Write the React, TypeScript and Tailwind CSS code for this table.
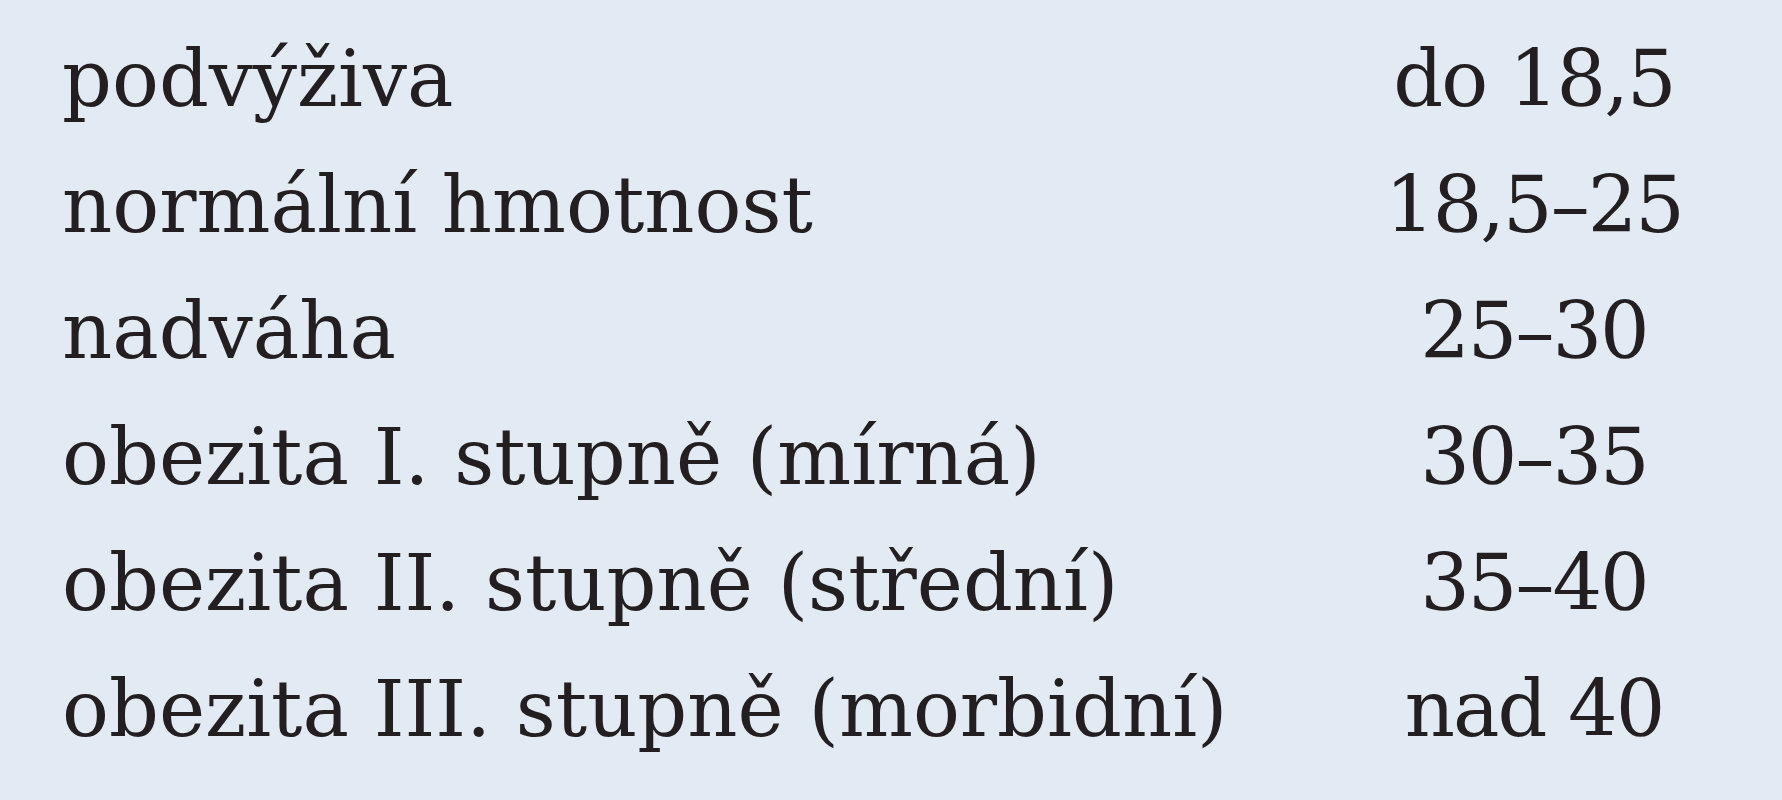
import React from "react";

const rows: [string, string][] = [
  ["podvýživa", "do 18,5"],
  ["normální hmotnost", "18,5–25"],
  ["nadváha", "25–30"],
  ["obezita I. stupně (mírná)", "30–35"],
  ["obezita II. stupně (střední)", "35–40"],
  ["obezita III. stupně (morbidní)", "nad 40"],
];

export default function App() {
  return (
    <div
      className="w-[1782px] h-[800px] bg-[#e2ebf3] text-[#231f20] pt-[16px] pl-[62px] pr-[98px] overflow-hidden"
      style={{ fontFamily: '"DejaVu Serif", "Liberation Serif", serif' }}
    >
      <div className="flex flex-col">
        {rows.map(([label, value]) => (
          <div key={label} className="flex justify-between items-baseline text-[78px] leading-[126px] whitespace-nowrap">
            <span>{label}</span>
            <span className="w-[300px] text-center tracking-[-2px]">{value}</span>
          </div>
        ))}
      </div>
    </div>
  );
}
